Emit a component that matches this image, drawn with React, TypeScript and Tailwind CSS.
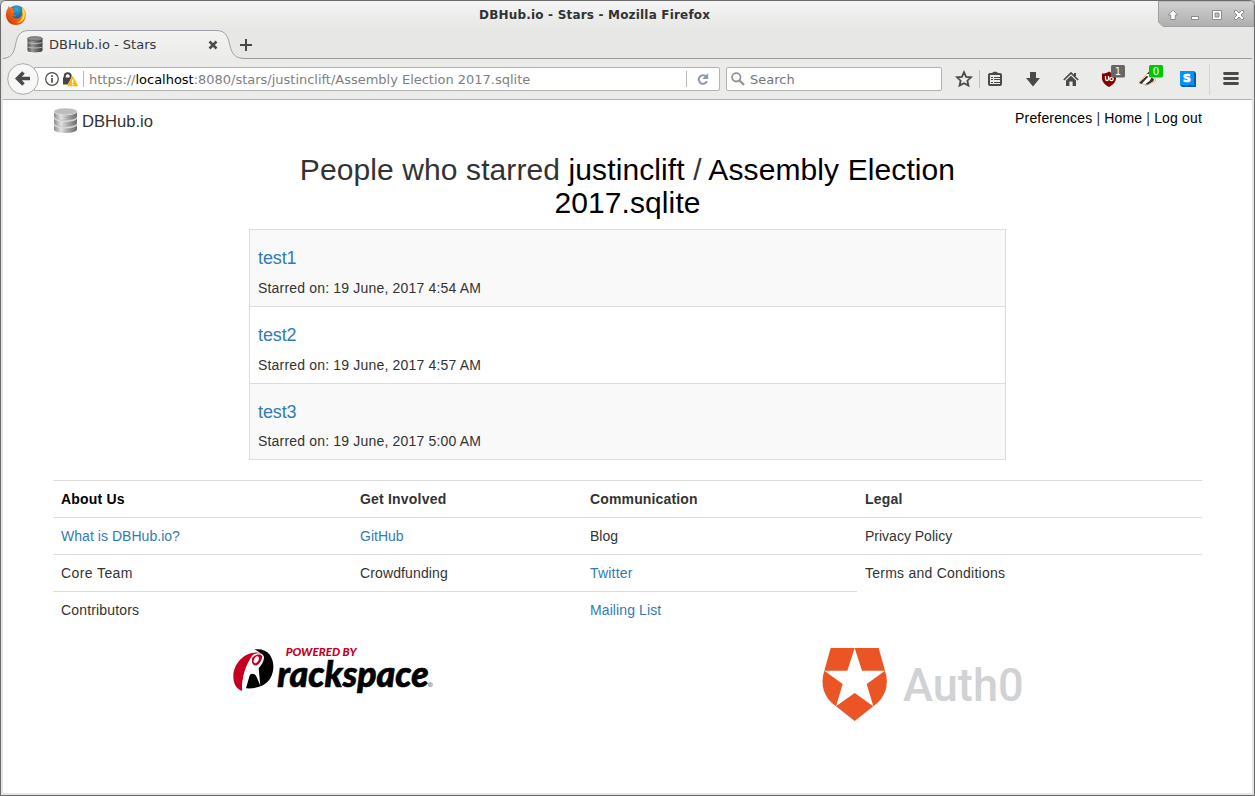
import React from "react";

const people = [
  { name: "test1", date: "19 June, 2017 4:54 AM" },
  { name: "test2", date: "19 June, 2017 4:57 AM" },
  { name: "test3", date: "19 June, 2017 5:00 AM" },
];

function Database({ className, id }: { className: string; id: string }) {
  return (
    <svg viewBox="0 0 24 26" className={className}>
      <defs>
        <linearGradient id={id} x1="0" x2="1" y1="0" y2="0">
          <stop offset="0" stopColor="#8a8a8a" />
          <stop offset="0.3" stopColor="#e2e2e2" />
          <stop offset="0.6" stopColor="#a8a8a8" />
          <stop offset="1" stopColor="#6c6c6c" />
        </linearGradient>
      </defs>
      {[16.5, 10, 3.5].map((y) => (
        <g key={y}>
          <path d={`M0.5 ${y}V${y + 5}C0.5 ${y + 9.5} 23.5 ${y + 9.5} 23.5 ${y + 5}V${y}Z`} fill={`url(#${id})`} />
          <ellipse cx="12" cy={y} rx="11.5" ry="3.4" fill="#c4c4c4" stroke="#ededed" strokeWidth="0.7" />
        </g>
      ))}
      <ellipse cx="12" cy="3.6" rx="10.5" ry="2.8" fill="#bdbdbd" />
    </svg>
  );
}

function TabDatabase() {
  return (
    <svg viewBox="0 0 16 17" className="h-[17px] w-[16px]">
      <defs>
        <linearGradient id="tabdb" x1="0" x2="1" y1="0" y2="0">
          <stop offset="0" stopColor="#4c4c4c" />
          <stop offset="0.3" stopColor="#989898" />
          <stop offset="0.65" stopColor="#666666" />
          <stop offset="1" stopColor="#3c3c3c" />
        </linearGradient>
      </defs>
      <path d="M0.500 2.500V14.500C0.500 17 15.500 17 15.500 14.500V2.500Z" fill="url(#tabdb)" />
      <path d="M0.500 6.300C2 7.800 14 7.800 15.500 6.300M0.500 10.800C2 12.300 14 12.300 15.500 10.800" fill="none" stroke="#c6c6c6" strokeWidth="0.900" />
      <ellipse cx="8" cy="2.600" rx="7.500" ry="2.100" fill="#8b8b8b" stroke="#5a5a5a" strokeWidth="0.600" />
    </svg>
  );
}

function Firefox() {
  return (
    <svg viewBox="0 0 22 22" className="ml-[4px] mt-[3px] h-[22px] w-[22px] shrink-0">
      <defs>
        <linearGradient id="fox" x1="0" y1="1" x2="1" y2="0">
          <stop offset="0" stopColor="#c9260c" />
          <stop offset="0.5" stopColor="#ef6a14" />
          <stop offset="1" stopColor="#ffd633" />
        </linearGradient>
        <radialGradient id="globe" cx="0.5" cy="0.2" r="0.8">
          <stop offset="0" stopColor="#35a8dc" />
          <stop offset="1" stopColor="#123a7c" />
        </radialGradient>
      </defs>
      <circle cx="11.5" cy="10" r="8.8" fill="url(#globe)" />
      <path d="M3 4.2C3.2 3 3.7 2.3 4 2C4.2 3.2 5 3.8 6 4.1L8.6 4.4C7.6 5.2 7.7 6.1 8 6.6L10 7.4C9.5 8.8 8.2 8.7 8 9.8C9 10.9 9.8 11.5 11.3 11.3C9.6 13.5 7.8 12.3 6.9 12C9 15.8 16.6 15.4 17.3 9.4L17 5.4C18 6 18.5 7 18.6 8C18.6 5.6 17.7 4 16.5 2.6C20 5 21.3 8.3 20.9 12C20 18 16 21 11 21C4.5 21 1 16 1 11C1 8 1.7 5.7 3 4.2Z" fill="url(#fox)" />
      <path d="M16.8 3C19.8 6 20.9 10 19.2 14C18.2 17 14.7 19.2 11.4 19.2C15.8 17.8 18.4 13.5 17.7 8.8Z" fill="#ffda4c" />
    </svg>
  );
}

function TitleBar() {
  return (
    <div className="flex h-[28px] bg-gradient-to-b from-[#f4f4f4] to-[#e7e7e5]">
      <Firefox />
      <div className="flex-1 pl-[452px] pt-[5px] font-['DejaVu_Sans'] text-[12px] font-bold leading-[18px] tracking-[0.19px] text-[#323232]">
        <span className="whitespace-nowrap">DBHub.io - Stars - Mozilla Firefox</span>
      </div>
      <svg viewBox="0 0 96 26" className="h-[26px] w-[96px] shrink-0">
        <defs>
          <linearGradient id="ctl" x1="0" x2="0" y1="0" y2="1">
            <stop offset="0" stopColor="#d2d2d2" />
            <stop offset="1" stopColor="#aeaeae" />
          </linearGradient>
        </defs>
        <path d="M0.5 0V21L5 25.5H96V0Z" fill="url(#ctl)" stroke="#a0a0a0" />
        <g fill="#fff" stroke="#8c8c8c" strokeWidth="1">
          <path d="M15 9.2L19.8 14H17.3V18.5H12.7V14H10.2Z" strokeLinejoin="round" />
          <rect x="33.5" y="15.5" width="7" height="3" />
          <path d="M54.500 9.500H63.500V18.500H54.500ZM57 12V16H61V12Z" fillRule="evenodd" />
          <path d="M76.500 9.500H78.500L81 12L83.500 9.500H85.500V11.500L83 14L85.500 16.500V18.500H83.500L81 16L78.500 18.500H76.500V16.500L79 14L76.500 11.500Z" />
        </g>
      </svg>
    </div>
  );
}

function TabBar() {
  return (
    <div className="relative flex h-[30px] items-center border-b border-[#9a9c9e] bg-[#e7e7e5] font-['DejaVu_Sans']">
      <svg viewBox="0 0 245 30" className="absolute left-0 top-0 h-[30px] w-[245px]">
        <defs>
          <linearGradient id="tab" x1="0" x2="0" y1="0" y2="1">
            <stop offset="0" stopColor="#f3f3f2" />
            <stop offset="1" stopColor="#ebebea" />
          </linearGradient>
        </defs>
        <path d="M0 29.500C7 29 10 26 12 19C14 9 15 1.500 26 1.500H213C224 1.500 225 9 227 17C229 25 232 29 240 29.500V30H0Z" fill="url(#tab)" />
        <path d="M-2 29.500C7 29.500 10 26 12 18C14 9 15 1.500 26 1.500H213C224 1.500 225 9 227 17C229 25 232 29.500 242 29.500" fill="none" stroke="#9da3a8" />
      </svg>
      <div className="relative flex items-center pl-[24px] pt-[2px]">
        <TabDatabase />
        <span className="ml-[6px] w-[159px] whitespace-nowrap text-[13px] leading-[18px] text-[#36393b]">DBHub.io - Stars</span>
        <svg viewBox="0 0 10 10" className="h-[10px] w-[10px]">
          <path d="M1.500 1.500L8.500 8.500M8.500 1.500L1.500 8.500" stroke="#4a4d50" strokeWidth="2.500" />
        </svg>
        <svg viewBox="0 0 12 12" className="ml-[22px] h-[12px] w-[12px]">
          <path d="M6 0V12M0 6H12" stroke="#484848" strokeWidth="2" />
        </svg>
      </div>
    </div>
  );
}

function AddressBox() {
  return (
    <div className="relative ml-[4px] flex h-[32px] w-[713px] items-center">
      <svg viewBox="0 0 32 32" className="relative z-10 h-[32px] w-[32px] shrink-0">
        <circle cx="16" cy="16" r="15.300" fill="#f7f7f7" stroke="#aaaaa8" />
        <path d="M16.500 9.500L10.500 15.500L16.500 21.500M11 15.500H23" fill="none" stroke="#4a4a4a" strokeWidth="3.600" />
      </svg>
      <div className="-ml-[5px] flex h-[24px] flex-1 items-center rounded-r-[2px] border border-[#b2b2ae] bg-white pl-[10px]">
        <svg viewBox="0 0 14 14" className="h-[14px] w-[14px]">
          <circle cx="7" cy="7" r="6.300" fill="none" stroke="#4a4a4a" strokeWidth="1.200" />
          <path d="M7 6V10.700M7 3.200V4.900" stroke="#4a4a4a" strokeWidth="1.700" />
        </svg>
        <svg viewBox="0 0 15 15" className="ml-[4px] h-[15px] w-[15px]">
          <path d="M0 5.500H9.500V12.500H0Z" fill="#454545" />
          <path d="M1.700 6.500V4.500C1.700 0.300 7.700 0.300 7.700 4.500V6.500" fill="none" stroke="#454545" strokeWidth="2" />
          <path d="M9.700 3L15.500 15H3.500Z" fill="#fff" />
          <path d="M9.700 5L14.300 13.500H5.100Z" fill="#ffb900" stroke="#ffb900" strokeWidth="1.300" strokeLinejoin="round" />
          <path d="M9.700 7.500V10.800M9.700 11.800V13.200" stroke="#fff" strokeWidth="1.300" />
        </svg>
        <div className="ml-[5px] h-[16px] w-px bg-[#b9b9b9]" />
        <span className="ml-[5px] flex-1 whitespace-nowrap pt-[2px] font-['DejaVu_Sans'] text-[13px] leading-[18px] tracking-[-0.015px] text-[#808080]">
          https://<span className="text-black">localhost</span>:8080/stars/justinclift/Assembly Election 2017.sqlite
        </span>
        <div className="h-[16px] w-px bg-[#b9b9b9]" />
        <svg viewBox="0 0 12 12" className="mx-[10px] h-[12px] w-[12px]">
          <path d="M8.800 3.200A4.300 4.300 0 1 0 10 8.200" fill="none" stroke="#8d9caa" strokeWidth="2" />
          <path d="M11.200 0V6H5.400Z" fill="#8d9caa" />
        </svg>
      </div>
    </div>
  );
}

function ToolbarIcons() {
  return (
    <svg viewBox="950 60 302 38" className="ml-[8px] h-[38px] w-[302px] shrink-0">
      <path d="M964 72.200L966.100 76.800L971 77.300L967.400 80.700L968.400 85.600L964 83.200L959.600 85.600L960.600 80.700L957 77.300L961.900 76.800Z" fill="none" stroke="#4a4a4a" strokeWidth="1.800" />
      <path d="M979.500 70V88" stroke="#c0c0be" />
      <path d="M992 73.500C992 71 998 71 998 73.500Z" fill="#4a4a4a" />
      <rect x="989" y="74" width="12" height="11" rx="1" fill="#ebebe9" stroke="#4a4a4a" strokeWidth="2" />
      <path d="M991 77.500H993M994 77.500H1000M991 79.500H993M994 79.500H1000M991 82.500H993M994 82.500H1000" stroke="#4a4a4a" strokeWidth="1.100" />
      <path d="M1030 72H1036V78H1040L1033 86.500L1026 78H1030Z" fill="#4a4a4a" />
      <path d="M1063.800 80L1071 73L1078.200 80" fill="none" stroke="#4a4a4a" strokeWidth="1.700" />
      <path d="M1066 80.500L1071 75.700L1076 80.500V86H1072.600V81.500H1069.400V86H1066Z" fill="#4a4a4a" />
      <path d="M1075 73V76" stroke="#4a4a4a" strokeWidth="2" />
      <path d="M1109 71.500C1107 73 1105 73.500 1102 73.500V78C1102 82 1105 85 1109 87C1113 85 1116 82 1116 78V73.500C1113 73.500 1111 73 1109 71.500Z" fill="#800000" />
      <path d="M1105.500 76V79C1105.500 81 1108.500 81 1108.500 79V76" fill="none" stroke="#fff" strokeWidth="1.300" />
      <circle cx="1111.500" cy="79" r="1.700" fill="none" stroke="#fff" strokeWidth="1.300" />
      <rect x="1111" y="65" width="14" height="12.500" rx="1.500" fill="#666" />
      <text x="1118" y="74.500" textAnchor="middle" fontFamily="DejaVu Sans" fontSize="10" fill="#fff">1</text>
      <path d="M1139.500 82L1148 73L1154.500 76L1155.500 81L1146 85.500Z" fill="#fff" stroke="#eda36a" strokeWidth="0.900" />
      <path d="M1139 83L1146.500 76L1148.500 76.500L1141.500 84ZM1145 84.500L1150 80.500L1151.500 77.500L1154 79L1153.500 81L1148 84.500ZM1147 74L1149 71.500L1150 74Z" fill="#303030" />
      <rect x="1149" y="65" width="14" height="12.500" rx="1.500" fill="#00c800" />
      <text x="1156" y="74.500" textAnchor="middle" fontFamily="DejaVu Sans" fontSize="10" fill="#fff">0</text>
      <path d="M1180 71H1194L1196 73V87H1182L1180 85Z" fill="#0060ad" />
      <rect x="1180" y="71" width="14" height="14" rx="0.500" fill="#0094f7" />
      <text x="1187" y="82" textAnchor="middle" fontFamily="DejaVu Sans" fontWeight="bold" fontSize="11" fill="#fff" stroke="#fff" strokeWidth="0.700">S</text>
      <path d="M1209.500 64V95" stroke="#d4d4d2" />
      <path d="M1224.500 73.500H1237.500M1224.500 78.500H1237.500M1224.500 83.500H1237.500" stroke="#4a4a4a" strokeWidth="2.800" strokeLinecap="round" />
    </svg>
  );
}

function Toolbar() {
  return (
    <div className="flex h-[41px] items-center border-b border-[#b2b2ae] bg-[#ebebe9]">
      <AddressBox />
      <div className="ml-[6px] flex h-[24px] w-[216px] shrink-0 items-center rounded-[2px] border border-[#b2b2ae] bg-white pl-[4px]">
        <svg viewBox="0 0 14 14" className="h-[14px] w-[14px]">
          <circle cx="5.300" cy="5.300" r="4.200" fill="none" stroke="#939393" strokeWidth="1.800" />
          <path d="M8.300 8.300L13 13" stroke="#939393" strokeWidth="2.300" />
        </svg>
        <span className="ml-[5px] pt-[2px] font-['DejaVu_Sans'] text-[13px] leading-[18px] text-[#757575]">Search</span>
      </div>
      <ToolbarIcons />
    </div>
  );
}

const link = "text-[#337ab7]";

function Cell({ children, className = "", line = true }: { children?: React.ReactNode; className?: string; line?: boolean }) {
  return <div className={`h-[37px] border-t px-2 py-2 ${line ? "border-[#dddddd]" : "border-transparent"} ${className}`}>{children}</div>;
}

function FooterLinks() {
  return (
    <div className="mt-5 grid grid-cols-[299px_230px_275px_345px]">
      <Cell className="font-bold tracking-[0.2px] text-black">About Us</Cell>
      <Cell className="font-bold tracking-[0.2px]">Get Involved</Cell>
      <Cell className="font-bold tracking-[0.15px]">Communication</Cell>
      <Cell className="font-bold tracking-[0.2px]">Legal</Cell>
      <Cell className={`${link} tracking-[0.04px]`}>What is DBHub.io?</Cell>
      <Cell className={link}>GitHub</Cell>
      <Cell>Blog</Cell>
      <Cell>Privacy Policy</Cell>
      <Cell className="tracking-[0.4px]">Core Team</Cell>
      <Cell className="tracking-[0.13px]">Crowdfunding</Cell>
      <Cell className={`${link} tracking-[0.2px]`}>Twitter</Cell>
      <Cell className="tracking-[0.24px]">Terms and Conditions</Cell>
      <Cell className="tracking-[0.17px]">Contributors</Cell>
      <Cell />
      <Cell className={`${link} tracking-[0.1px]`}>Mailing List</Cell>
      <Cell line={false} />
    </div>
  );
}

function Rackspace() {
  return (
    <svg viewBox="0 0 690 210" className="h-[70px] w-[230px]">
      <path d="M104 43C145 38 162 68 160 100C157 138 130 163 78 160L98 90L122 55Z" fill="#000" />
      <path d="M128 56C85 40 40 80 40 124C40 145 48 162 66 168C66 125 78 90 98 65Z" fill="#c40022" />
      <path d="M66 168C66 125 76 92 98 60C112 51 130 53 132 66C132 80 124 90 116 100L121 152L110 126C102 110 88 114 82 132L76 162Z" fill="#fff" />
      <path d="M97 68C108 56 124 56 127 64C126 76 119 86 111 91C100 94 92 84 97 68Z" fill="#c40022" />
      <ellipse cx="109" cy="74" rx="6.500" ry="11" transform="rotate(28 109 74)" fill="#fff" />
      <text x="197" y="62" textLength="213" lengthAdjust="spacingAndGlyphs" fontFamily="Lato" fontWeight="900" fontStyle="italic" fontSize="31" fill="#c40022">POWERED BY</text>
      <text x="172" y="156" textLength="454" lengthAdjust="spacingAndGlyphs" fontFamily="Lato" fontWeight="900" fontStyle="italic" fontSize="108" fill="#000" stroke="#000" strokeWidth="2">rackspace</text>
      <circle cx="631" cy="149" r="6" fill="none" stroke="#777" strokeWidth="2" />
      <path d="M629 153V146H633V149H630L634 153" fill="none" stroke="#777" strokeWidth="1.500" />
    </svg>
  );
}

function Auth0() {
  return (
    <svg viewBox="0 0 675 285" className="h-[95px] w-[225px] overflow-visible">
      <g fill="#eb5424">
        <path d="M62 39H134L112 107H43Z" />
        <path d="M134 39H206L225 107H156Z" />
        <path d="M43 107L98 147L78 214C42 188 29 150 43 107Z" />
        <path d="M225 107L170 147L190 214C226 188 239 150 225 107Z" />
        <path d="M134 174L190 214L134 258L78 214Z" />
      </g>
      <text x="279" y="198" textLength="362" lengthAdjust="spacingAndGlyphs" fontFamily="Roboto" fontWeight="500" fontSize="141" fill="#d0d2d3">Auth0</text>
    </svg>
  );
}

export default function App() {
  return (
    <div className="h-[796px] w-[1255px] bg-[#b8b8b8]">
      <div className="flex h-full flex-col overflow-hidden rounded-t-[6px] border border-[#6b6b6b] bg-[#e4e4e2]">
        <TitleBar />
        <div className="mx-[2px] mb-[2px] flex flex-1 flex-col">
          <TabBar />
          <Toolbar />
          <main className="flex-1 bg-white px-[50px] font-['Liberation_Sans',sans-serif] text-[14px] leading-[20px] text-[#333333]">
            <header className="flex h-[49px] justify-between pt-[8px]">
              <div className="flex h-[26px] items-center">
                <Database id="logodb" className="h-[26px] w-[25px]" />
                <span className="ml-[4px] mt-[1px] text-[16.6px]">DBHub.io</span>
              </div>
              <div className="tracking-[0.16px]">
                <span className="text-black">Preferences</span> | <span className="text-black">Home</span> | <span className="text-black">Log out</span>
              </div>
            </header>
            <h1 className="mx-auto mt-[4px] w-[757px] text-center text-[30px] leading-[33px] tracking-[0.1px]">
              People who starred <span className="text-black">justinclift</span> / <span className="text-black">Assembly Election<br />2017.sqlite</span>
            </h1>
            <div className="mx-auto mt-[10px] w-[757px] border border-t-0 border-[#dddddd]">
              {people.map((p) => (
                <div key={p.name} className="h-[76.8px] border-t border-[#dddddd] px-2 pt-[19px] odd:bg-[#f9f9f9]">
                  <h4 className="text-[18px] leading-[19.8px] tracking-[-0.1px] text-[#337ab7]">{p.name}</h4>
                  <p className="mt-[9px] tracking-[0.18px]">Starred on: {p.date}</p>
                </div>
              ))}
            </div>
            <FooterLinks />
            <div className="mt-[7px] flex pl-[167px]">
              <Rackspace />
              <div className="ml-[360px]">
                <Auth0 />
              </div>
            </div>
          </main>
        </div>
      </div>
    </div>
  );
}
